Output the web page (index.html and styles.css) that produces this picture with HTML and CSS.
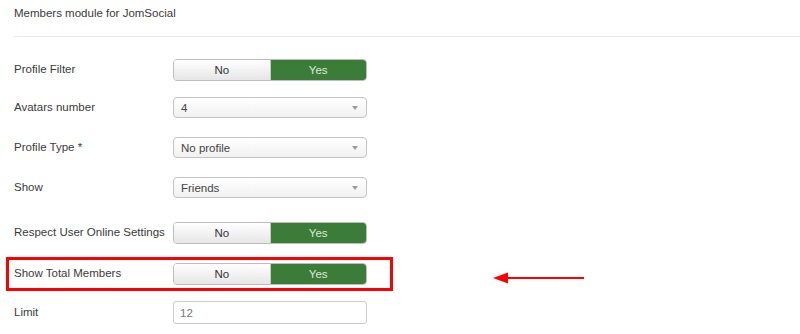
FILE: index.html
```html
<!DOCTYPE html>
<html lang="en">
<head>
    <meta charset="UTF-8">
    <title>Members module for JomSocial</title>
    <link rel="stylesheet" href="styles.css">
</head>
<body>
    <div class="page">
        <h1 class="title">Members module for JomSocial</h1>

        <div class="form">
            <div class="row row-first">
                <label class="label">Profile Filter</label>
                <div class="toggle">
                    <span class="toggle-no">No</span>
                    <span class="toggle-yes">Yes</span>
                </div>
            </div>

            <div class="row row-select">
                <label class="label">Avatars number</label>
                <div class="select">4</div>
            </div>

            <div class="row row-select2">
                <label class="label">Profile Type *</label>
                <div class="select">No profile</div>
            </div>

            <div class="row row-select2">
                <label class="label">Show</label>
                <div class="select">Friends</div>
            </div>

            <div class="row row-toggle">
                <label class="label">Respect User Online Settings</label>
                <div class="toggle">
                    <span class="toggle-no">No</span>
                    <span class="toggle-yes">Yes</span>
                </div>
            </div>

            <div class="row row-highlight">
                <label class="label">Show Total Members</label>
                <div class="toggle">
                    <span class="toggle-no">No</span>
                    <span class="toggle-yes">Yes</span>
                </div>
                <div class="arrow">
                    <svg width="92" height="12" viewBox="0 0 92 12">
                        <line x1="12" y1="6" x2="91" y2="6" stroke="#f00" stroke-width="2.2"/>
                        <polygon points="0,6 15,0.5 15,11.5" fill="#f00"/>
                    </svg>
                </div>
            </div>

            <div class="row row-last">
                <label class="label">Limit</label>
                <div class="input">12</div>
            </div>
        </div>
    </div>
</body>
</html>
```

FILE: styles.css
```css
body {
    margin: 0;
    padding: 0;
    background: #fff;
    font-family: "Liberation Sans", Arial, sans-serif;
    font-size: 11.5px;
    color: #3a3a3a;
}
.page {
    padding: 0 0 0 14px;
}
.title {
    margin: 0;
    padding: 7px 0 0;
    height: 29px;
    font-size: 11.5px;
    font-weight: normal;
    color: #3a3a3a;
    border-bottom: 1px solid #e8e8e8;
}
.form {
    display: flex;
    flex-direction: column;
}
.row {
    display: flex;
    align-items: center;
    height: 22px;
}
.row .label {
    padding-bottom: 2px;
}
.row-first {
    margin-top: 22px;
}
.row-select {
    margin-top: 16px;
    height: 21px;
}
.row-select2 {
    margin-top: 19px;
    height: 21px;
}
.row-toggle {
    margin-top: 24px;
}
.row-highlight {
    position: relative;
    margin: 13px 0 0 -8px;
    width: 353px;
    padding: 3px 23px 3px 5px;
    border: 3px solid #f00;
}
.row-last {
    margin-top: 10px;
    height: 23px;
}
.label {
    width: 159px;
    flex: none;
    white-space: nowrap;
}
.toggle {
    display: flex;
    width: 194px;
    height: 22px;
    box-sizing: border-box;
    border: 1px solid #bdbdbd;
    border-radius: 4px;
    overflow: hidden;
}
.toggle-no,
.toggle-yes {
    flex: 1;
    display: flex;
    align-items: center;
    justify-content: center;
}
.toggle-no {
    background: linear-gradient(#ffffff, #e6e6e6);
    color: #333;
    border-right: 1px solid #c8c8c8;
}
.toggle-yes {
    background: #3b7c39;
    color: #dde8dc;
}
.select {
    width: 194px;
    height: 21px;
    box-sizing: border-box;
    border: 1px solid #c4c4c4;
    border-radius: 4px;
    padding: 0 0 0 7px;
    background: linear-gradient(#ffffff, #f1f1f1);
    color: #444;
    display: flex;
    align-items: center;
    position: relative;
}
.select::after {
    content: "";
    position: absolute;
    right: 8px;
    top: 8px;
    border-left: 3px solid transparent;
    border-right: 3px solid transparent;
    border-top: 4px solid #999;
}
.input {
    width: 194px;
    height: 23px;
    box-sizing: border-box;
    border: 1px solid #ccc;
    border-radius: 3px;
    padding: 0 0 0 6px;
    display: flex;
    align-items: center;
    color: #777;
    background: #fff;
}
.arrow {
    position: absolute;
    left: 484px;
    top: 12px;
    line-height: 0;
}
```
